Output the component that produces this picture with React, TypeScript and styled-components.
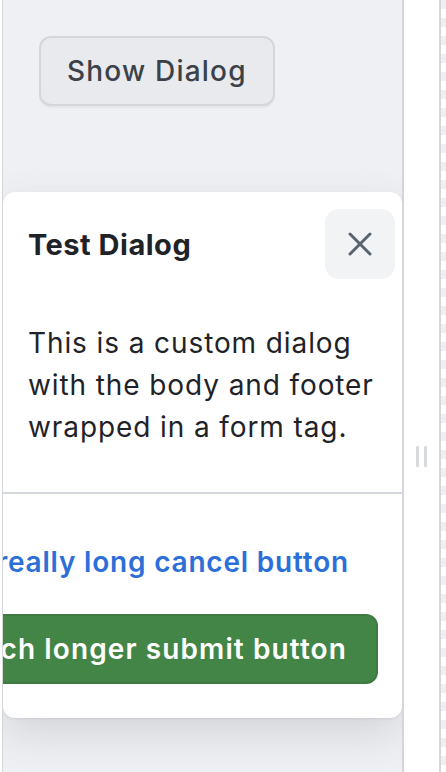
import React from "react";
import styled, {createGlobalStyle} from "styled-components";

const GlobalStyle = createGlobalStyle`
    html, body {
        margin: 0;
        padding: 0;
        background: #fff;
    }

    body {
        font-family: Inter, "Noto Sans", "Liberation Sans", sans-serif;
        -webkit-font-smoothing: antialiased;
    }
`;

const Frame = styled.div`
    display: flex;
    flex-direction: row;
    width: 446px;
    height: 772px;
    overflow: hidden;
`;

const LeftEdge = styled.div`
    width: 2px;
    flex-shrink: 0;
    background: #fff;
`;

const Preview = styled.div`
    width: 402px;
    flex-shrink: 0;
    box-sizing: border-box;
    border-left: 1px solid #d3d6db;
    border-right: 2px solid #d3d6db;
    background-color: #eff0f3;
    overflow: hidden;

    display: flex;
    flex-direction: column;
    align-items: flex-start;
    padding-top: 36px;
`;

const ShowButton = styled.button`
    margin-left: 36px;
    height: 70px;
    padding: 0 26px;
    border: 2px solid #d3d6db;
    border-radius: 12px;
    background-color: #e8eaee;
    box-shadow: 0 2px 0 rgba(31, 35, 40, 0.04);
    color: #3b4148;
    font-family: Inter, "Noto Sans", sans-serif;
    font-size: 28px;
    font-weight: 500;
    letter-spacing: 1.2px;
    cursor: pointer;
`;

const Dialog = styled.form`
    margin-top: 86px;
    width: 100%;
    height: 526px;
    flex-shrink: 0;
    background-color: #fff;
    border-radius: 12px;
    box-shadow: 0 16px 40px rgba(66, 74, 83, 0.16), 0 1px 3px rgba(31, 35, 40, 0.08);
    overflow: hidden;

    display: flex;
    flex-direction: column;
`;

const Header = styled.div`
    display: flex;
    flex-direction: row;
    align-items: center;
    justify-content: space-between;
    padding: 17px 7px 17px 25px;
`;

const Title = styled.h1`
    margin: 0;
    color: #1f2328;
    font-size: 29px;
    font-weight: 700;
    line-height: 1;
    letter-spacing: 0.5px;
`;

const CloseButton = styled.button`
    width: 70px;
    height: 70px;
    border: none;
    border-radius: 14px;
    background-color: #f2f3f5;
    display: flex;
    align-items: center;
    justify-content: center;
    cursor: pointer;
    padding: 0;
`;

const Body = styled.div`
    padding: 26px 25px 44px 25px;
    color: #1f2328;
    font-size: 28px;
    line-height: 42px;
    letter-spacing: 0.9px;
    border-bottom: 2px solid #d3d8de;
`;

const Footer = styled.div`
    display: flex;
    flex-direction: column;
    align-items: flex-end;
    gap: 17px;
    padding: 33px 24px 0 0;
`;

const FooterButton = styled.button<{ $primary?: boolean }>`
    height: 70px;
    flex-shrink: 0;
    padding: 0 29px;
    white-space: nowrap;
    border: ${({$primary}) => ($primary ? "2px solid rgba(31, 35, 40, 0.12)" : "none")};
    border-radius: 12px;
    background-color: ${({$primary}) => ($primary ? "#438546" : "transparent")};
    color: ${({$primary}) => ($primary ? "#ffffff" : "#2c6fd8")};
    font-family: Inter, "Noto Sans", sans-serif;
    font-size: 28px;
    font-weight: 600;
    letter-spacing: ${({$primary}) => ($primary ? "1.1px" : "0.8px")};
    cursor: pointer;
`;

const Gutter = styled.div`
    width: 35px;
    flex-shrink: 0;
    background: #fff;
    display: flex;
    align-items: center;
    justify-content: center;
    gap: 5px;
    padding-top: 140px;
    box-sizing: border-box;
`;

const HandleBar = styled.span`
    width: 3px;
    height: 21px;
    background-color: #d8dade;
    border-radius: 1px;
`;

const SidePane = styled.div`
    flex: 1;
    border-left: 2px solid #d3d6db;
    background: repeating-linear-gradient(
            to bottom,
            #efeff1 0 9px,
            #ffffff 9px 18px
    );
`;

const CloseIcon = () => (
    <svg width="24" height="24" viewBox="0 0 24 24" fill="none">
        <path d="M2 2L22 22M22 2L2 22" stroke="#59636e" strokeWidth="3" strokeLinecap="round"/>
    </svg>
);

export default function App() {
    return (
        <>
            <GlobalStyle/>
            <Frame>
                <LeftEdge/>
                <Preview>
                    <ShowButton type="button">Show Dialog</ShowButton>
                    <Dialog onSubmit={e => e.preventDefault()}>
                        <Header>
                            <Title>Test Dialog</Title>
                            <CloseButton type="button" aria-label="Close">
                                <CloseIcon/>
                            </CloseButton>
                        </Header>
                        <Body>
                            This is a custom dialog with the body and footer wrapped in a form tag.
                        </Body>
                        <Footer>
                            <FooterButton type="button">This is a really long cancel button</FooterButton>
                            <FooterButton type="submit" $primary>This is a much longer submit button</FooterButton>
                        </Footer>
                    </Dialog>
                </Preview>
                <Gutter>
                    <HandleBar/>
                    <HandleBar/>
                </Gutter>
                <SidePane/>
            </Frame>
        </>
    );
}
